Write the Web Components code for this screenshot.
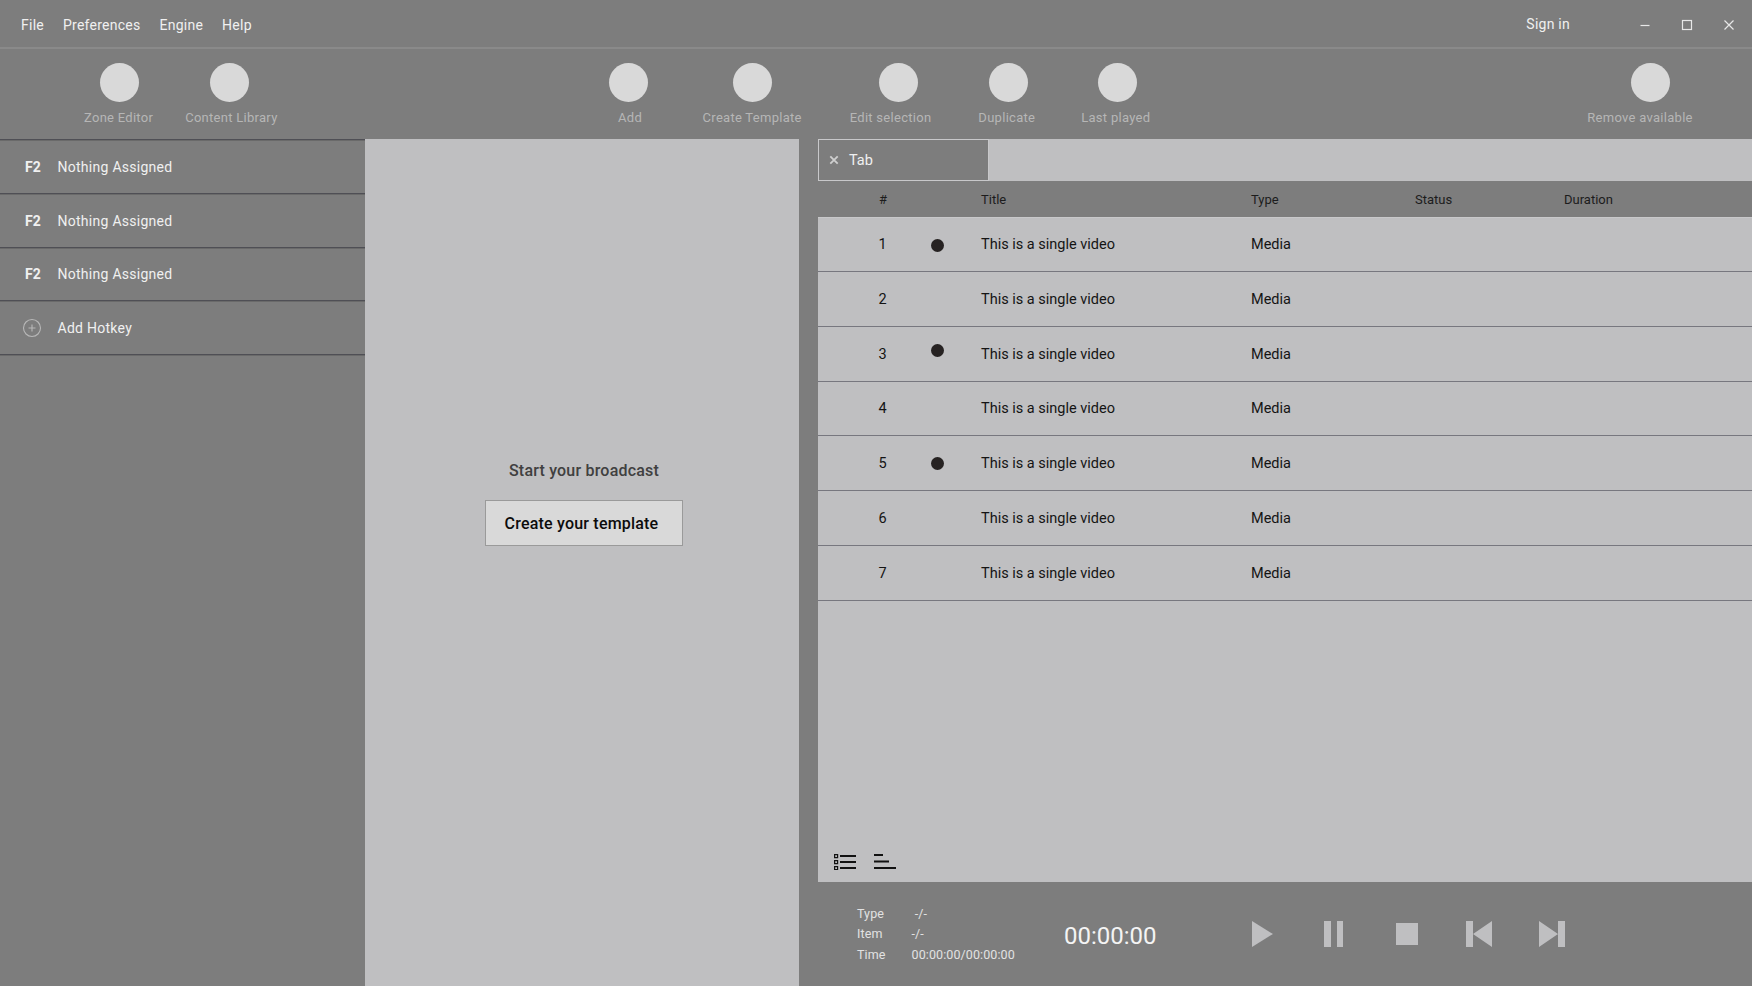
<!DOCTYPE html>
<html>
<head>
<meta charset="utf-8">
<title>Playout</title>
<style>
  html, body { margin: 0; height: 100%; background: #7d7d7d; overflow: hidden; }
  body { font-family: Roboto, "Liberation Sans", sans-serif; }
  app-shell { height: 986px; }
</style>
</head>
<body>
<app-shell>
  <menu-bar slot="menu"></menu-bar>
  <tool-bar slot="tools">
    <tool-item label="Zone Editor" shift="1"></tool-item>
    <tool-item label="Content Library" shift="-2" gap="32"></tool-item>
    <tool-item label="Add" shift="-2" gap="331"></tool-item>
    <tool-item label="Create Template" gap="51"></tool-item>
    <tool-item label="Edit selection" shift="8" gap="48"></tool-item>
    <tool-item label="Duplicate" shift="2" gap="47"></tool-item>
    <tool-item label="Last played" shift="2" gap="46"></tool-item>
    <tool-item label="Remove available" shift="10" gap="437"></tool-item>
  </tool-bar>
  <hotkey-list slot="side">
    <hotkey-row key="F2">Nothing Assigned</hotkey-row>
    <hotkey-row key="F2">Nothing Assigned</hotkey-row>
    <hotkey-row key="F2">Nothing Assigned</hotkey-row>
    <hotkey-row add>Add Hotkey</hotkey-row>
  </hotkey-list>
  <start-panel slot="center"></start-panel>
  <playlist-panel slot="list">
    <playlist-row num="1" dot="1">This is a single video</playlist-row>
    <playlist-row num="2">This is a single video</playlist-row>
    <playlist-row num="3" dot="-4">This is a single video</playlist-row>
    <playlist-row num="4">This is a single video</playlist-row>
    <playlist-row num="5" dot="0">This is a single video</playlist-row>
    <playlist-row num="6">This is a single video</playlist-row>
    <playlist-row num="7">This is a single video</playlist-row>
  </playlist-panel>
  <transport-bar slot="transport"></transport-bar>
</app-shell>

<script>
// Small helper, every element below just hands its markup to this
class Base extends HTMLElement {
  constructor(html) {
    super();
    this.attachShadow({ mode: 'open' });
    this.shadowRoot.innerHTML = html;
  }
}

class AppShell extends Base {
  constructor() {
    super(`
      <style>
        :host { display: flex; flex-direction: column; }
        .main { flex: 1; display: flex; min-height: 0; }
        .side { width: 365px; flex: none; }
        .center { width: 434px; flex: none; }
        .right { flex: 1; display: flex; flex-direction: column; padding-left: 19px; min-width: 0; }
      </style>
      <slot name="menu"></slot>
      <slot name="tools"></slot>
      <div class="main">
        <div class="side"><slot name="side"></slot></div>
        <div class="center"><slot name="center"></slot></div>
        <div class="right">
          <slot name="list"></slot>
          <slot name="transport"></slot>
        </div>
      </div>`);
  }
}

class MenuBar extends Base {
  constructor() {
    super(`
      <style>
        :host {
          display: flex; align-items: center; height: 47px; flex: none; box-sizing: content-box;
          border-bottom: 2px solid #8a8a8a; padding-left: 21px;
          color: #f0f0f0; font-size: 14px; letter-spacing: .25px;
        }
        .menu { display: flex; gap: 19px; flex: 1; padding-top: 2px; }
        .sign { margin-right: 67px; }
        .win { display: flex; gap: 26px; margin-right: 15px; align-items: center; padding-top: 2px; }
        svg { display: block; width: 16px; height: 16px; fill: none; stroke: #e8e8e8; stroke-width: 1.2; }
      </style>
      <div class="menu"><span>File</span><span>Preferences</span><span>Engine</span><span>Help</span></div>
      <span class="sign">Sign in</span>
      <div class="win">
        <svg viewBox="0 0 16 16"><path d="M3.500 8.500h9"/></svg>
        <svg viewBox="0 0 16 16"><rect x="3.500" y="3.500" width="9" height="9"/></svg>
        <svg viewBox="0 0 16 16"><path d="M3.500 3.500l9 9M12.500 3.500l-9 9"/></svg>
      </div>`);
  }
}

class ToolBar extends Base {
  constructor() {
    super(`
      <style>
        :host {
          display: flex; height: 90px; flex: none; box-sizing: border-box;
          padding: 14px 0 0 84px; align-items: flex-start;
        }
      </style>
      <slot></slot>`);
  }
}

class ToolItem extends Base {
  constructor() {
    super(`
      <style>
        :host { display: flex; flex-direction: column; align-items: center; flex: none; }
        .c { width: 39px; height: 39px; border-radius: 50%; background: #d9d9d9; }
        .l { margin-top: 8px; font-size: 13px; line-height: 16px; color: #b6b6b6; letter-spacing: .28px; white-space: nowrap; }
      </style>
      <div class="c"></div><div class="l"></div>`);
  }
  connectedCallback() {
    const shift = +this.getAttribute('shift') || 0;
    this.shadowRoot.querySelector('.l').textContent = this.getAttribute('label');
    // centred child: margin on one side moves it by half
    this.shadowRoot.querySelector('.c').style[shift < 0 ? 'marginRight' : 'marginLeft'] = Math.abs(shift * 2) + 'px';
    if (this.hasAttribute('gap')) this.style.marginLeft = this.getAttribute('gap') + 'px';
  }
}

class HotkeyList extends Base {
  constructor() {
    super(`
      <style>:host { display: block; border-top: 1px solid #4f4f55; box-shadow: inset 0 1px 0 #6a6a6a; }</style>
      <slot></slot>`);
  }
}

class HotkeyRow extends Base {
  constructor() {
    super(`
      <style>
        :host {
          display: flex; align-items: center; height: 53.75px; box-sizing: border-box; padding-top: 1px;
          border-bottom: 1px solid #4f4f55; box-shadow: 0 1px 0 #6a6a6a;
          color: #f0f0f0; font-size: 14px; letter-spacing: .27px;
        }
        .k { width: 57.5px; padding-left: 25px; box-sizing: border-box; font-weight: 700; flex: none; letter-spacing: .1px; }
        svg { display: block; margin-left: -3px; width: 20px; height: 20px; fill: none; stroke: #b8b8b8; stroke-width: 1.1; }
      </style>
      <div class="k"></div><slot></slot>`);
  }
  connectedCallback() {
    const k = this.shadowRoot.querySelector('.k');
    if (this.hasAttribute('add')) {
      k.innerHTML = '<svg viewBox="0 0 20 20"><circle cx="10" cy="10" r="8.500"/><path d="M10 6.500v7M6.500 10h7"/></svg>';
    } else {
      k.textContent = this.getAttribute('key');
    }
  }
}

class StartPanel extends Base {
  constructor() {
    super(`
      <style>
        :host {
          display: flex; flex-direction: column; align-items: center; height: 100%;
          box-sizing: border-box; padding: 322px 0 0 3px; background: #bfbfc1;
        }
        .t { font-size: 16px; font-weight: 500; line-height: 20px; color: #404040; letter-spacing: .2px; padding-left: 1px; }
        button {
          margin-top: 19px; width: 198px; height: 46px; padding: 0 4px 0 0; font: 500 16px Roboto, sans-serif;
          color: #0c0c0c; background: #d9d9d9; border: 1px solid #9a9a9a; letter-spacing: .2px;
        }
      </style>
      <div class="t">Start your broadcast</div>
      <button>Create your template</button>`);
  }
}

// spacer, number, dot, spacer, then the text columns
const GRID = 'grid-template-columns: 37px 56px 52px 18px 270px 164px 149px 1fr;';

class PlaylistPanel extends Base {
  constructor() {
    super(`
      <style>
        :host { display: flex; flex-direction: column; height: 743px; background: #bfbfc1; flex: none; }
        .tabs { height: 42px; flex: none; display: flex; box-sizing: border-box; }
        .tab {
          width: 171px; box-sizing: border-box; background: #7d7d7d; border: 1px solid #c8c8ca;
          display: flex; align-items: center; padding-left: 9px; gap: 9px;
          color: #f0f0f0; font-size: 14.5px;
        }
        .tab svg { width: 12px; height: 12px; fill: none; stroke: #cfcfcf; stroke-width: 1.8; }
        .head {
          height: 36px; flex: none; background: #7d7d7d; display: grid; ${GRID}
          align-items: center; color: #1c1c1c; font-size: 13px; box-shadow: 0 1px 0 #c8c8ca;
        }
        .num { text-align: center; }
        .rows { flex: 1; }
        .foot { display: flex; gap: 18px; padding: 0 0 12px 16px; height: 16px; flex: none; }
        .foot svg { width: 22px; height: 16px; stroke: #111; stroke-width: 1.9; fill: none; display: block; }
      </style>
      <div class="tabs"><div class="tab">
        <svg viewBox="0 0 12 12"><path d="M2.300 2.300l7.400 7.400M9.700 2.300l-7.400 7.400"/></svg><span>Tab</span>
      </div></div>
      <div class="head">
        <span></span><span class="num">#</span><span></span><span></span>
        <span>Title</span><span>Type</span><span>Status</span><span>Duration</span>
      </div>
      <div class="rows"><slot></slot></div>
      <div class="foot">
        <svg viewBox="0 0 22 16"><path d="M6 2h16M6 8h16M6 14h16"/><path stroke-width="1.2" d="M.6.6h3v3h-3zM.6 6.600h3v3h-3zM.6 12.600h3v3h-3z"/></svg>
        <svg viewBox="0 0 22 16"><path d="M0 1h9M0 7.500h15M0 14h22"/></svg>
      </div>`);
  }
}

class PlaylistRow extends Base {
  constructor() {
    super(`
      <style>
        :host {
          display: grid; ${GRID} height: 54.85px; box-sizing: border-box; align-items: center; padding-top: 1px;
          border-bottom: 1px solid #77777f; color: #141414; font-size: 14.500px;
        }
        .num { text-align: center; padding-right: 1px; }
        .dot { justify-self: center; width: 13px; height: 13px; border-radius: 50%; background: #262222; }
      </style>
      <span></span><span class="num"></span><span class="d"></span><span></span>
      <span><slot></slot></span><span>Media</span>`);
  }
  connectedCallback() {
    const s = this.shadowRoot;
    s.querySelector('.num').textContent = this.getAttribute('num');
    if (this.hasAttribute('dot')) {
      const d = s.querySelector('.d');
      d.className = 'dot';
      d.style.marginTop = (+this.getAttribute('dot') * 2) + 'px';
    }
  }
}

class TransportBar extends Base {
  constructor() {
    super(`
      <style>
        :host {
          display: flex; align-items: center; flex: 1; margin-left: -19px; padding-left: 19px;
          color: #e2e2e2; font-size: 12.500px;
        }
        .info {
          display: grid; grid-template-columns: 54.500px auto; grid-auto-rows: 20.500px; align-items: center;
          margin-left: 39px; width: 207px; letter-spacing: .1px; padding-bottom: 1px;
        }
        .clock { font-size: 24px; color: #f4f4f4; width: 188px; padding-top: 4px; }
        .btns { display: flex; align-items: center; padding-bottom: 1px; }
        svg { display: block; height: 26px; fill: #bfbfc1; }
      </style>
      <div class="info">
        <span>Type</span><span>&nbsp;-/-</span>
        <span>Item</span><span>-/-</span>
        <span>Time</span><span>00:00:00/00:00:00</span>
      </div>
      <div class="clock">00:00:00</div>
      <div class="btns">
        <svg width="21" viewBox="0 0 21 26"><path d="M0 0l21 13L0 26z"/></svg>
        <svg width="19" viewBox="0 0 19 26" style="margin-left:51px"><path d="M0 0h7v26H0zM13 0h6v26h-6z"/></svg>
        <svg width="22" viewBox="0 0 22 26" style="margin-left:53px"><path d="M0 2h22v22H0z"/></svg>
        <svg width="26" viewBox="0 0 26 26" style="margin-left:48px"><path d="M0 0h7v26H0zM7 13L26 0v26z"/></svg>
        <svg width="26" viewBox="0 0 26 26" style="margin-left:47px"><path d="M19 0h7v26h-7zM19 13L0 0v26z"/></svg>
      </div>`);
  }
}

customElements.define('app-shell', AppShell);
customElements.define('menu-bar', MenuBar);
customElements.define('tool-bar', ToolBar);
customElements.define('tool-item', ToolItem);
customElements.define('hotkey-list', HotkeyList);
customElements.define('hotkey-row', HotkeyRow);
customElements.define('start-panel', StartPanel);
customElements.define('playlist-panel', PlaylistPanel);
customElements.define('playlist-row', PlaylistRow);
customElements.define('transport-bar', TransportBar);
</script>
</body>
</html>
